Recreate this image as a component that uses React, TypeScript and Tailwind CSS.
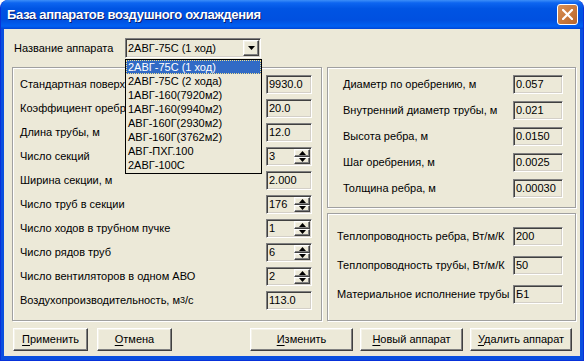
import React from "react";

// classic win32 bevels
const raised =
  "border border-t-white border-l-white border-r-[#404040] border-b-[#404040] shadow-[inset_-1px_-1px_0_#808080,inset_1px_1px_0_#F4F2E8]";
const sunken =
  "border border-t-[#808080] border-l-[#808080] border-r-white border-b-white shadow-[inset_1px_1px_0_#404040,inset_-1px_-1px_0_#D4D0C8]";
const etched = "border border-[#A0A0A0] shadow-[inset_1px_1px_0_#fff,1px_1px_0_#fff]";

const items = [
  "2АВГ-75С (1 ход)",
  "2АВГ-75С (2 хода)",
  "1АВГ-160(7920м2)",
  "1АВГ-160(9940м2)",
  "АВГ-160Г(2930м2)",
  "АВГ-160Г(3762м2)",
  "АВГ-ПХГ.100",
  "2АВГ-100С",
];

// first two labels are partly hidden by the open list
const leftRows: { label: React.ReactNode; value: string; spin?: boolean; clip?: boolean }[] = [
  { label: "Стандартная поверхность, м2", value: "9930.0", clip: true },
  { label: "Коэффициент оребрения", value: "20.0", clip: true },
  { label: "Длина трубы, м", value: "12.0" },
  { label: "Число секций", value: "3", spin: true },
  { label: "Ширина секции, м", value: "2.000" },
  { label: "Число труб в секции", value: "176", spin: true },
  { label: "Число ходов в трубном пучке", value: "1", spin: true },
  { label: "Число рядов труб", value: "6", spin: true },
  { label: "Число вентиляторов в одном АВО", value: "2", spin: true },
  {
    label: (
      <>
        Воздухопроизводительность, м<sup className="text-[9px] relative -top-[1px]">3</sup>/с
      </>
    ),
    value: "113.0",
  },
];

const geomRows = [
  { label: "Диаметр по оребрению, м", value: "0.057" },
  { label: "Внутренний диаметр трубы, м", value: "0.021" },
  { label: "Высота ребра, м", value: "0.0150" },
  { label: "Шаг оребрения, м", value: "0.0025" },
  { label: "Толщина ребра, м", value: "0.00030" },
];

const matRows = [
  { label: "Теплопроводность ребра, Вт/м/К", value: "200" },
  { label: "Теплопроводность трубы, Вт/м/К", value: "50" },
  { label: "Материальное исполнение трубы", value: "Б1" },
];

function Arrow({ down }: { down?: boolean }) {
  return (
    <svg width="7" height="4" viewBox="0 0 7 4">
      <path d={down ? "M0 0H7L3.5 4z" : "M3.5 0L7 4H0z"} fill="#000" />
    </svg>
  );
}

function Spin() {
  return (
    <div className="flex flex-col w-[16px] h-[15px] mr-[1px]">
      <div className={`flex-1 flex items-center justify-center bg-[#ECE9D8] ${raised}`}>
        <Arrow />
      </div>
      <div className={`flex-1 flex items-center justify-center bg-[#ECE9D8] ${raised}`}>
        <Arrow down />
      </div>
    </div>
  );
}

function Field({ value, spin, w }: { value: string; spin?: boolean; w: string }) {
  return (
    <div className={`${w} h-[19px] flex items-center justify-between bg-[#ECE9D8] ${sunken}`}>
      <span className="pl-[2px] leading-none">{value}</span>
      {spin && <Spin />}
    </div>
  );
}

function Btn({ u, rest, w }: { u: string; rest: string; w: string }) {
  return (
    <div className={`${w} h-[23px] flex items-center justify-center bg-[#ECE9D8] ${raised}`}>
      <span>
        <span className="underline underline-offset-[2px]">{u}</span>
        {rest}
      </span>
    </div>
  );
}

export default function App() {
  return (
    <div className="w-[584px] h-[361px] bg-white font-['Liberation_Sans',Arial,sans-serif] text-[11px] text-black">
      <div className="w-full h-full flex flex-col rounded-t-[8px] bg-[#0A4FDF] border border-[#0831D9] border-t-0 overflow-hidden">
        {/* title bar */}
        <div className="h-[29px] shrink-0 flex items-center justify-between pl-[6px] pr-[5px] bg-[linear-gradient(180deg,#3D8EF8_0%,#0D65F0_10%,#0054E3_30%,#0050E0_70%,#0060F2_90%,#0045D6_100%)]">
          <span className="text-white font-bold text-[13px] tracking-[-0.3px] [text-shadow:1px_1px_0_#0A1E6E]">
            База аппаратов воздушного охлаждения
          </span>
          <div className="w-[21px] h-[21px] rounded-[3px] border border-white bg-[linear-gradient(135deg,#D99055_0%,#C7783C_55%,#B5652D_100%)] flex items-center justify-center">
            <svg width="11" height="11" viewBox="0 0 11 11">
              <path d="M1 1L10 10M10 1L1 10" stroke="#fff" strokeWidth="2.2" strokeLinecap="square" />
            </svg>
          </div>
        </div>

        {/* client */}
        <div className="flex-1 mx-[3px] mb-[4px] bg-[#ECE9D8] flex flex-col relative">
          {/* combo row */}
          <div className="flex items-center h-[20px] mt-[9px] pl-[10px]">
            <span className="w-[111px]">Название аппарата</span>
            <div className={`w-[136px] h-[20px] flex items-center justify-between bg-[#ECE9D8] ${sunken}`}>
              <span className="pl-[2px]">{items[0]}</span>
              <div className={`w-[16px] h-[16px] mr-[1px] flex items-center justify-center bg-[#ECE9D8] ${raised}`}>
                <Arrow down />
              </div>
            </div>
          </div>

          {/* panels */}
          <div className="flex gap-[5px] mt-[9px] pl-[8px] pr-[4px]">
            <div className={`w-[310px] h-[254px] pt-[7px] pl-[7px] pr-[9px] flex flex-col gap-[5px] ${etched}`}>
              {leftRows.map((r, i) => (
                <div key={i} className="flex items-center justify-between h-[19px]">
                  <span className={r.clip ? "w-[106px] overflow-hidden whitespace-nowrap" : ""}>{r.label}</span>
                  <Field value={r.value} spin={r.spin} w="w-[46px]" />
                </div>
              ))}
            </div>

            <div className="flex-1 flex flex-col gap-[5px]">
              <div className={`h-[141px] pt-[7px] pl-[15px] pr-[12px] flex flex-col gap-[7px] ${etched}`}>
                {geomRows.map((r, i) => (
                  <div key={i} className="flex items-center justify-between h-[19px]">
                    <span>{r.label}</span>
                    <Field value={r.value} w="w-[50px]" />
                  </div>
                ))}
              </div>
              <div className={`h-[108px] pt-[13px] pl-[9px] pr-[12px] flex flex-col gap-[10px] ${etched}`}>
                {matRows.map((r, i) => (
                  <div key={i} className="flex items-center justify-between h-[19px]">
                    <span>{r.label}</span>
                    <Field value={r.value} w="w-[50px]" />
                  </div>
                ))}
              </div>
            </div>
          </div>

          {/* buttons */}
          <div className="flex justify-between mt-[7px] pl-[9px] pr-[8px]">
            <div className="flex gap-[9px]">
              <Btn u="П" rest="рименить" w="w-[75px]" />
              <Btn u="О" rest="тмена" w="w-[75px]" />
            </div>
            <div className="flex gap-[7px]">
              <Btn u="И" rest="зменить" w="w-[103px]" />
              <Btn u="Н" rest="овый аппарат" w="w-[103px]" />
              <Btn u="У" rest="далить аппарат" w="w-[102px]" />
            </div>
          </div>

          {/* open dropdown list */}
          <div className="absolute left-[121px] top-[30px] w-[137px] h-[115px] border border-black bg-[#ECE9D8] flex flex-col">
            {items.map((t, i) => (
              <div
                key={i}
                className={`h-[14px] shrink-0 flex items-center pl-[2px] leading-none ${
                  i === 0 ? "bg-[#316AC5] text-white outline-1 outline-dotted outline-[#F0E090] -outline-offset-1" : ""
                }`}
              >
                {t}
              </div>
            ))}
          </div>
        </div>
      </div>
    </div>
  );
}
